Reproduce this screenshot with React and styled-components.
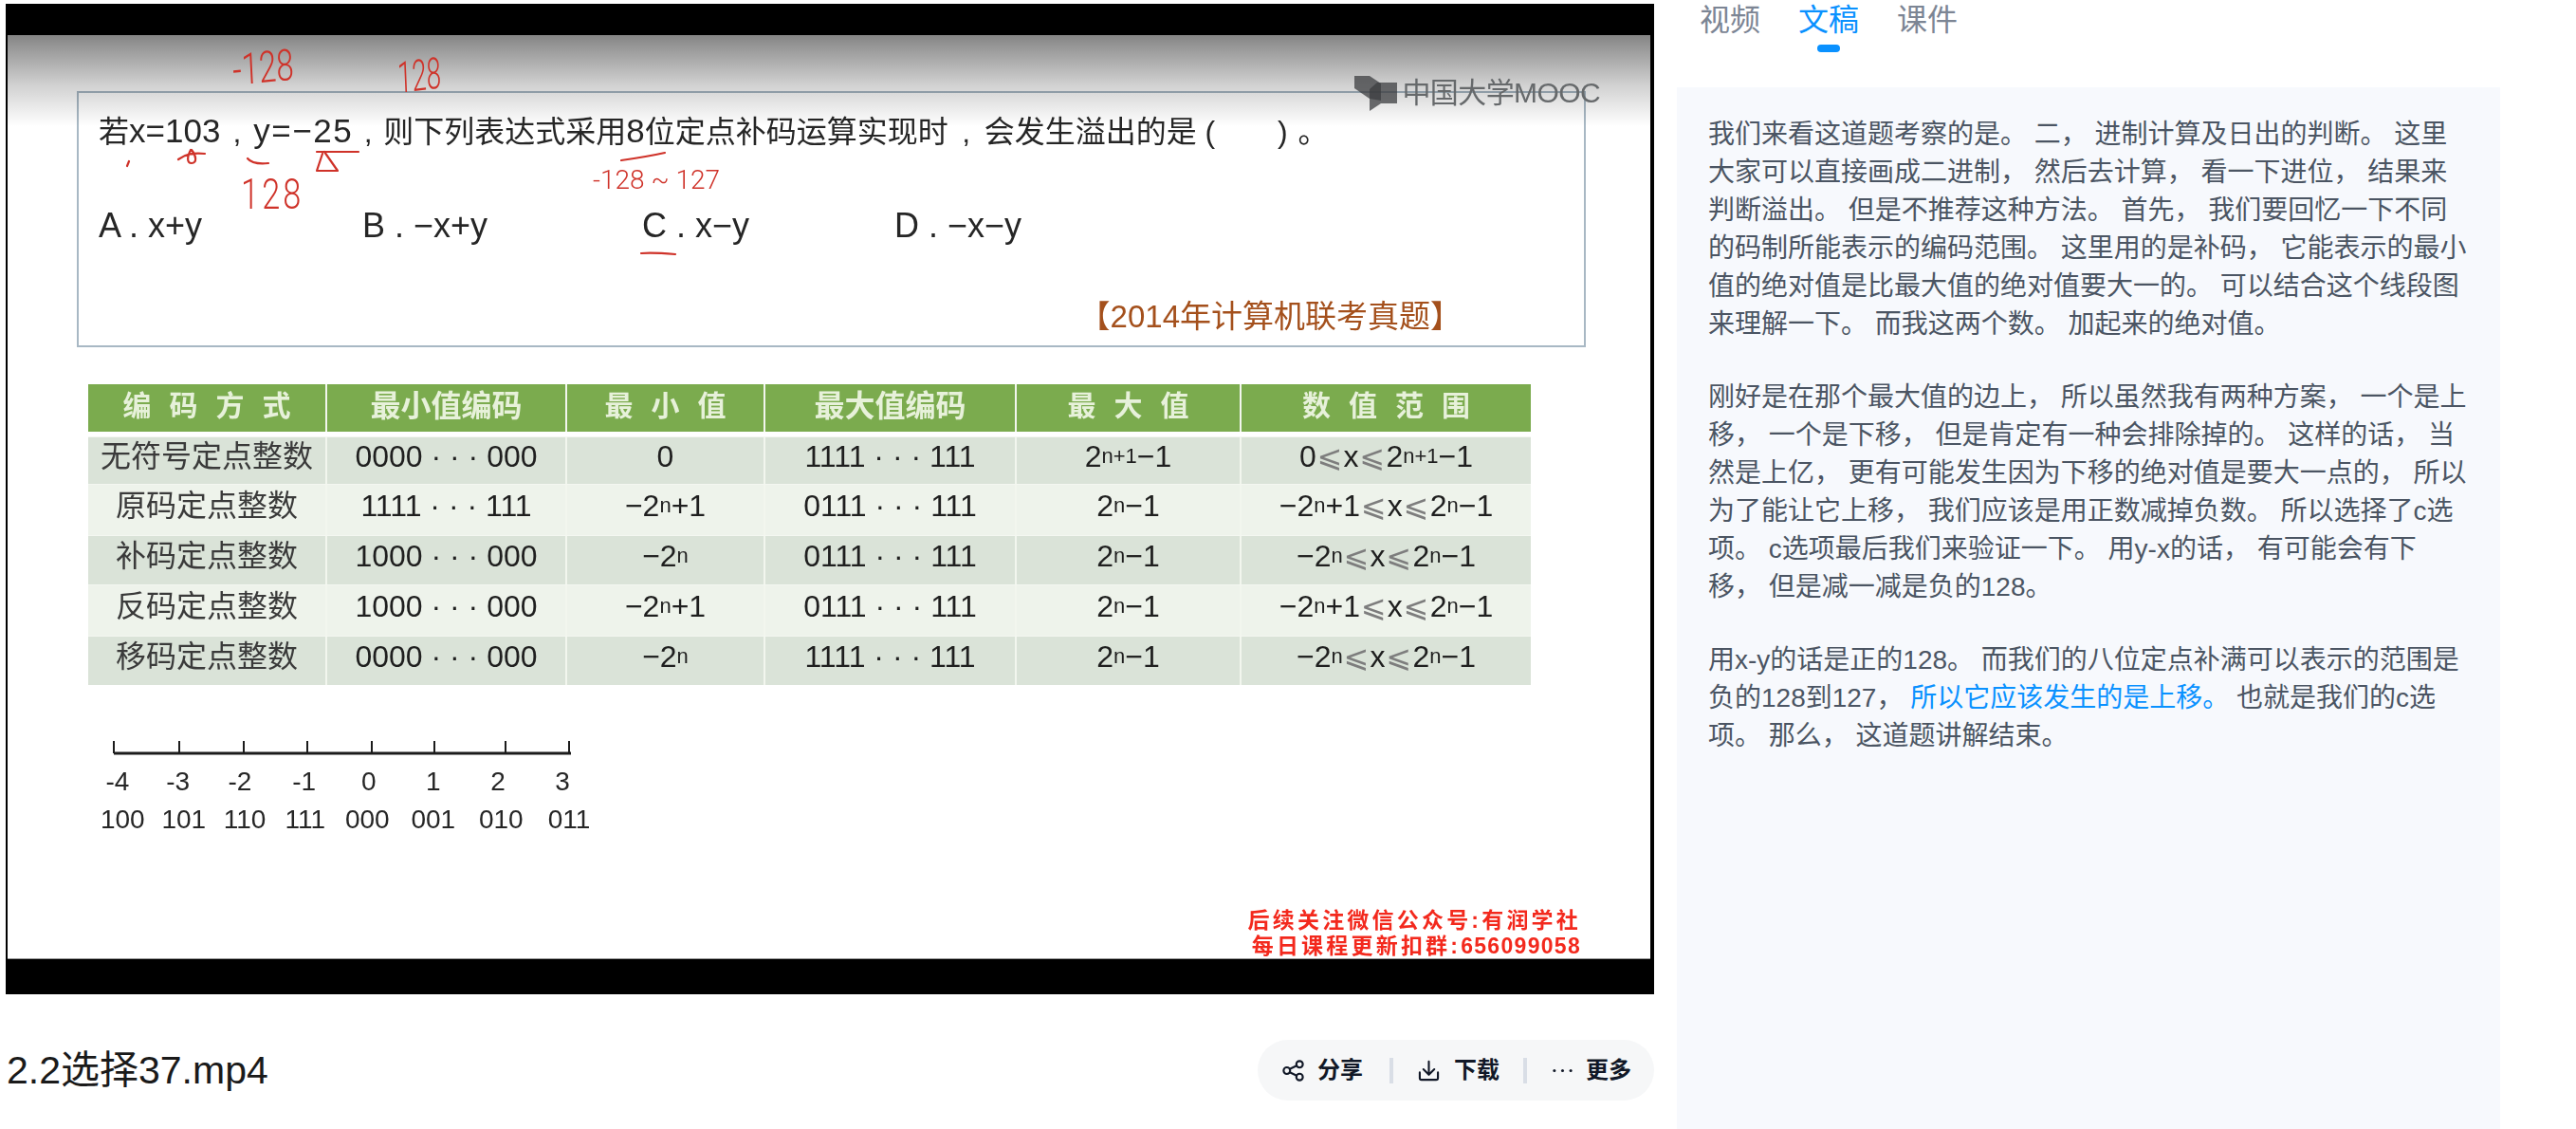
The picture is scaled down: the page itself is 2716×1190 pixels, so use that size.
import React from 'react';
import styled, { createGlobalStyle } from 'styled-components';

const sans = `'Liberation Sans', 'Noto Sans CJK SC', sans-serif`;
const red = '#cf3229';

const GlobalStyle = createGlobalStyle`
  html, body {
    margin: 0;
    padding: 0;
    background: #fff;
  }
  body {
    font-family: ${sans};
  }
`;

const Page = styled.div`
  display: flex;
  width: 2716px;
  height: 1190px;
  overflow: hidden;
  background: #fff;
`;

const Main = styled.main`
  width: 1738px;
  margin-left: 6px;
  padding-top: 4px;
`;

const Video = styled.div`
  height: 1044px;
  box-sizing: border-box;
  padding: 33px 4px 37px 2px;
  background: #000;
`;

const Slide = styled.div`
  position: relative;
  display: flex;
  flex-direction: column;
  height: 100%;
  box-sizing: border-box;
  overflow: hidden;
  background: #fff;
  border-bottom: 1px solid #999;
  color: #262626;
  filter: blur(0.45px);
`;

const TopShade = styled.div`
  position: absolute;
  top: 0;
  left: 0;
  right: 0;
  height: 96px;
  background: linear-gradient(rgba(0, 0, 0, 0.48), rgba(0, 0, 0, 0.18) 55%, rgba(0, 0, 0, 0));
`;

const Watermark = styled.div`
  position: absolute;
  top: 42px;
  right: 53px;
  display: flex;
  align-items: center;
  gap: 5px;
  font-size: 30px;
  line-height: 38px;
  letter-spacing: -0.6px;
  color: #66696b;
  svg {
    width: 45px;
    height: 37px;
  }
`;

const Question = styled.section`
  width: 1591px;
  height: 270px;
  margin: 59px 0 0 73px;
  padding: 20px 129px 0 21px;
  box-sizing: border-box;
  border: 2px solid #a8b8c4;
`;

const Stem = styled.div`
  font-size: 32px;
  line-height: 40px;
  white-space: nowrap;
`;

const Latin = styled.span`
  font-size: 35px;
  letter-spacing: ${p => p.$track || 0}px;
`;

const Sep = styled.span`
  display: inline-block;
  width: ${p => p.$w}px;
  text-align: center;
`;

const Options = styled.div`
  display: flex;
  margin-top: 59px;
  font-size: 36px;
  line-height: 40px;
`;

const Option = styled.div`
  width: ${p => p.$w}px;
`;

const Source = styled.div`
  margin-top: 56px;
  text-align: right;
  font-size: 33px;
  line-height: 40px;
  color: #a4501c;
`;

const Scribble = styled.svg`
  position: absolute;
  top: 0;
  left: 0;
  width: 900px;
  height: 250px;
  fill: none;
  stroke: ${red};
  stroke-width: 2.2;
  stroke-linecap: round;
  stroke-linejoin: round;
`;

const Note = styled.span`
  position: absolute;
  left: ${p => p.$x}px;
  top: ${p => p.$y}px;
  font-family: Roboto, 'Liberation Sans', sans-serif;
  font-weight: 300;
  font-size: ${p => p.$size}px;
  line-height: 1;
  letter-spacing: ${p => p.$track || 0}px;
  color: ${red};
  white-space: nowrap;
  transform-origin: left top;
  transform: scaleX(${p => p.$sx || 1}) rotate(${p => p.$turn || 0}deg);
`;

const Table = styled.div`
  width: 1521px;
  margin: 39px 0 0 85px;
`;

const Row = styled.div`
  display: grid;
  grid-template-columns: 252px 253px 209px 265px 237px 305px;
  height: ${p => p.$h}px;
  margin-bottom: ${p => p.$gap || 0}px;
  box-sizing: border-box;
  background: ${p => (p.$head ? '#7bab4e' : p.$light ? '#eef3eb' : '#dae3d8')};
  color: ${p => (p.$head ? '#e7f1da' : '#1f1f1f')};
  border-top: ${p => (p.$head ? 0 : 1)}px solid #f4f7f1;
`;

const Cell = styled.div`
  display: flex;
  justify-content: center;
  align-items: center;
  padding-bottom: ${p => (p.$head ? 4 : 10)}px;
  box-sizing: border-box;
  border-right: 2px solid #f2f6ee;
  font-size: 32px;
  line-height: 32px;
  white-space: nowrap;
  &:last-child {
    border-right: 0;
  }
`;

const HeadText = styled.span`
  letter-spacing: ${p => (p.$spread ? 19 : 0)}px;
  margin-right: ${p => (p.$spread ? -19 : 0)}px;
  font-weight: 700;
  font-size: ${p => (p.$spread ? 30 : 32)}px;
`;

const Kind = styled.span`
  color: #3a3a3a;
`;

const Sup = styled.sup`
  font-size: 22px;
  line-height: 0;
  vertical-align: 11px;
`;

const Leq = styled.span`
  margin: 0 1px;
  font-family: 'DejaVu Sans', sans-serif;
  font-size: 32px;
  line-height: 1;
  color: #7d7d7d;
`;

const Ruler = styled.svg`
  display: block;
  width: 484px;
  height: 16px;
  margin: 58px 0 0 111px;
  fill: none;
  stroke: #1c1c1c;
  stroke-width: 2;
`;

const Scale = styled.div`
  display: grid;
  grid-template-columns: ${p => p.$cols};
  justify-items: center;
  width: max-content;
  margin-left: ${p => p.$left}px;
  margin-top: ${p => p.$top || 0}px;
  font-size: 28px;
  line-height: 40px;
`;

const Notice = styled.div`
  margin-top: auto;
  margin-bottom: -1px;
  padding-right: 73px;
  text-align: right;
  font-size: 23px;
  font-weight: 700;
  line-height: 27px;
  letter-spacing: 3.2px;
  color: #f3291d;
  filter: blur(0.4px);
`;

const NoticeDigits = styled.span`
  letter-spacing: 1.3px;
`;

const InfoBar = styled.div`
  display: flex;
  align-items: center;
  justify-content: space-between;
  margin-top: 48px;
`;

const Title = styled.h1`
  margin: 0 0 0 1px;
  font-size: 41px;
  font-weight: 400;
  line-height: 64px;
  color: #1a1a1a;
`;

const Actions = styled.div`
  display: flex;
  align-items: center;
  box-sizing: border-box;
  width: 418px;
  height: 64px;
  padding-left: 26px;
  border-radius: 32px;
  background: #f6f7f8;
  color: #111827;
`;

const Action = styled.button`
  display: flex;
  align-items: center;
  gap: ${p => p.$gap}px;
  padding: 0;
  border: 0;
  background: none;
  color: inherit;
  font: 700 24px/32px ${sans};
  svg {
    width: 23px;
    height: 23px;
    fill: none;
    stroke: currentColor;
    stroke-width: 2.2;
    stroke-linecap: round;
    stroke-linejoin: round;
  }
`;

const Divider = styled.span`
  width: 4px;
  height: 27px;
  margin: 0 ${p => p.$r}px 0 ${p => p.$l}px;
  background: #d9dee6;
`;

const Side = styled.aside`
  display: flex;
  flex-direction: column;
  width: 868px;
  margin-left: 24px;
`;

const Tabs = styled.nav`
  display: flex;
  gap: 40px;
  padding: 1px 0 0 24px;
`;

const Tab = styled.div`
  display: flex;
  flex-direction: column;
  align-items: center;
  font-size: 32px;
  line-height: 40px;
  color: ${p => (p.$active ? '#0a91ff' : '#7c8594')};
  &::after {
    content: '';
    width: 24px;
    height: 8px;
    margin-top: 6px;
    border-radius: 4px;
    background: ${p => (p.$active ? '#0a91ff' : 'transparent')};
  }
`;

const Transcript = styled.div`
  flex: 1;
  margin-top: 37px;
  padding: 30px 0 0 33px;
  background: #f7f9fd;
  font-size: 28px;
  line-height: 40px;
  color: #4b5563;
`;

const Paragraph = styled.p`
  margin: 0 0 37px;
`;

const Line = styled.span`
  display: block;
  white-space: pre;
`;

const Mark = styled.span`
  color: #0a91ff;
`;

const n = <Sup>n</Sup>;
const n1 = <Sup>n+1</Sup>;
const le = <Leq>⩽</Leq>;

const rows = [
  { h: 50, kind: '无符号定点整数', cells: ['0000 · · · 000', '0', '1111 · · · 111', <>2{n1}−1</>, <>0{le}x{le}2{n1}−1</>] },
  { h: 54, light: true, kind: '原码定点整数', cells: ['1111 · · · 111', <>−2{n}+1</>, '0111 · · · 111', <>2{n}−1</>, <>−2{n}+1{le}x{le}2{n}−1</>] },
  { h: 52, kind: '补码定点整数', cells: ['1000 · · · 000', <>−2{n}</>, '0111 · · · 111', <>2{n}−1</>, <>−2{n}{le}x{le}2{n}−1</>] },
  { h: 54, light: true, kind: '反码定点整数', cells: ['1000 · · · 000', <>−2{n}+1</>, '0111 · · · 111', <>2{n}−1</>, <>−2{n}+1{le}x{le}2{n}−1</>] },
  { h: 52, kind: '移码定点整数', cells: ['0000 · · · 000', <>−2{n}</>, '1111 · · · 111', <>2{n}−1</>, <>−2{n}{le}x{le}2{n}−1</>] },
];

const heads = [
  ['编码方式', true],
  ['最小值编码', false],
  ['最小值', true],
  ['最大值编码', false],
  ['最大值', true],
  ['数值范围', true],
];

const ticks = [1, 70, 138, 205, 273, 339, 414, 481];

const transcript = [
  [
    '我们来看这道题考察的是。 二， 进制计算及日出的判断。 这里',
    '大家可以直接画成二进制， 然后去计算， 看一下进位， 结果来',
    '判断溢出。 但是不推荐这种方法。 首先， 我们要回忆一下不同',
    '的码制所能表示的编码范围。 这里用的是补码， 它能表示的最小',
    '值的绝对值是比最大值的绝对值要大一的。 可以结合这个线段图',
    '来理解一下。 而我这两个数。 加起来的绝对值。',
  ],
  [
    '刚好是在那个最大值的边上， 所以虽然我有两种方案， 一个是上',
    '移， 一个是下移， 但是肯定有一种会排除掉的。 这样的话， 当',
    '然是上亿， 更有可能发生因为下移的绝对值是要大一点的， 所以',
    '为了能让它上移， 我们应该是用正数减掉负数。 所以选择了c选',
    '项。 c选项最后我们来验证一下。 用y-x的话， 有可能会有下',
    '移， 但是减一减是负的128。',
  ],
  [
    '用x-y的话是正的128。 而我们的八位定点补满可以表示的范围是',
    <>负的128到127， <Mark>所以它应该发生的是上移。</Mark> 也就是我们的c选</>,
    '项。 那么， 这道题讲解结束。',
  ],
];

export default function App() {
  return (
    <Page>
      <GlobalStyle />
      <Main>
        <Video>
          <Slide>
            <Question>
              <Stem>
                若<Latin>x=103</Latin><Sep $w={35}>,</Sep><Latin $track={1.5}>y=−25</Latin><Sep $w={32}>,</Sep>则下列表达式采用<Latin>8</Latin>位定点补码运算实现时<Sep $w={38}>,</Sep>会发生溢出的是 ( <Sep $w={48} /> ) <Sep $w={36}>。</Sep>
              </Stem>
              <Options>
                <Option $w={278}>A . x+y</Option>
                <Option $w={295}>B . −x+y</Option>
                <Option $w={266}>C . x−y</Option>
                <Option $w={200}>D . −x−y</Option>
              </Options>
              <Source>【2014年计算机联考真题】</Source>
            </Question>

            <Table>
              <Row $head $h={50} $gap={5}>
                {heads.map(([label, spread]) => (
                  <Cell $head key={label}>
                    <HeadText $spread={spread}>{label}</HeadText>
                  </Cell>
                ))}
              </Row>
              {rows.map(row => (
                <Row key={row.kind} $h={row.h} $light={row.light}>
                  <Cell><Kind>{row.kind}</Kind></Cell>
                  {row.cells.map((cell, i) => (
                    <Cell key={i}>{cell}</Cell>
                  ))}
                </Row>
              ))}
            </Table>

            <Ruler viewBox="0 0 484 16">
              <path d="M1 14H483" strokeWidth="3" />
              {ticks.map(x => (
                <path key={x} d={`M${x} 1V14`} />
              ))}
            </Ruler>
            <Scale $left={84} $top={8} $cols="64px 63.5px 67px 68.5px 67.5px 68.5px 68px 68px">
              {['-4', '-3', '-2', '-1', '0', '1', '2', '3'].map(v => (
                <span key={v}>{v}</span>
              ))}
            </Scale>
            <Scale $left={89} $cols="64.5px 64.5px 64px 63.5px 67.5px 71.5px 71.5px 72px">
              {['100', '101', '110', '111', '000', '001', '010', '011'].map(v => (
                <span key={v}>{v}</span>
              ))}
            </Scale>

            <Notice>
              后续关注微信公众号:有润学社
              <br />
              每日课程更新扣群:<NoticeDigits>656099058</NoticeDigits>
            </Notice>

            <TopShade />
            <Watermark>
              <svg viewBox="0 0 45 37">
                <path d="M0 0H16L28 8V26L16 24L0 13Z" fill="rgba(60, 62, 64, 0.75)" />
                <path d="M45 7H24L16 14V37L28 29H45Z" fill="rgba(60, 62, 64, 0.75)" />
              </svg>
              中国大学MOOC
            </Watermark>

            <Scribble viewBox="0 0 900 250">
              <path d="M128 133l-2 5" />
              <path d="M180 131c8-6 16-7 28-6M193 121c-4 8-4 14 1 14c6 0 5-8 0-14" />
              <path d="M253 130c4 5 12 6 22 5" />
              <path d="M326 123h44M334 123l14 20h-22l6-18" />
              <path d="M647 132c14-2 28-4 46-8" />
              <path d="M668 230c12-1 24 0 36 1" />
            </Scribble>
            <Note $x={236} $y={14} $size={46} $sx={0.72} $turn={-4}>-128</Note>
            <Note $x={410} $y={22} $size={46} $sx={0.6} $turn={-4}>128</Note>
            <Note $x={246} $y={146} $size={44} $sx={0.78} $track={4}>128</Note>
            <Note $x={617} $y={139} $size={28}>-128 ~ 127</Note>
          </Slide>
        </Video>

        <InfoBar>
          <Title>2.2选择37.mp4</Title>
          <Actions>
            <Action $gap={14}>
              <svg viewBox="0 0 24 24">
                <circle cx="19" cy="5" r="3.6" />
                <circle cx="5" cy="12" r="3.6" />
                <circle cx="19" cy="19" r="3.6" />
                <path d="M8.2 10.2l7.6-3.6M8.2 13.8l7.6 3.6" />
              </svg>
              分享
            </Action>
            <Divider $l={28} $r={26} />
            <Action $gap={15}>
              <svg viewBox="0 0 24 24">
                <path d="M2 14v6a2 2 0 0 0 2 2h16a2 2 0 0 0 2-2v-6" />
                <path d="M12 2v14M6 10.5l6 6 6-6" />
              </svg>
              下载
            </Action>
            <Divider $l={25} $r={26} />
            <Action $gap={13}>
              <svg viewBox="0 0 24 24">
                <circle cx="3" cy="12" r="1.6" fill="currentColor" stroke="none" />
                <circle cx="12" cy="12" r="1.6" fill="currentColor" stroke="none" />
                <circle cx="21" cy="12" r="1.6" fill="currentColor" stroke="none" />
              </svg>
              更多
            </Action>
          </Actions>
        </InfoBar>
      </Main>

      <Side>
        <Tabs>
          <Tab>视频</Tab>
          <Tab $active>文稿</Tab>
          <Tab>课件</Tab>
        </Tabs>
        <Transcript>
          {transcript.map((lines, i) => (
            <Paragraph key={i}>
              {lines.map((line, j) => (
                <Line key={j}>{line}</Line>
              ))}
            </Paragraph>
          ))}
        </Transcript>
      </Side>
    </Page>
  );
}
